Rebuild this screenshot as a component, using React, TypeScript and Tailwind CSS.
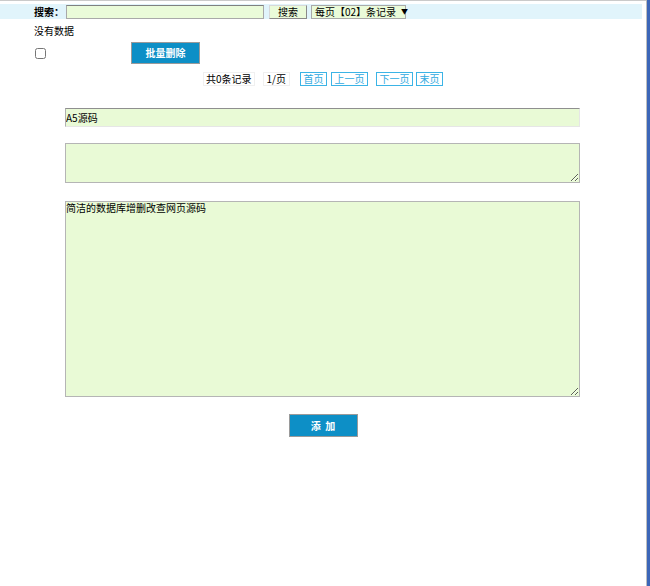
const font = "font-['SimSun','Noto_Sans_CJK_SC','Liberation_Sans',sans-serif]";

const pageLinks = [
  { label: "首页", w: "w-[27px]", ml: "ml-[10px]" },
  { label: "上一页", w: "w-[37px]", ml: "ml-[4px]" },
  { label: "下一页", w: "w-[37px]", ml: "ml-[8px]" },
  { label: "末页", w: "w-[27px]", ml: "ml-[3px]" },
];

export default function App() {
  return (
    <div className={`flex h-[586px] w-[650px] whitespace-nowrap bg-white text-[10px] leading-none text-black ${font}`}>
      <div className="w-[646px] border-t border-[#cacaca]">
        {/* search bar */}
        <div className="mt-[3px] mr-[4px] flex h-[15px] items-center bg-[#e1f4fb]">
          <span className="ml-[34px] w-[32px] font-bold">搜索：</span>
          <input
            className="h-[14px] w-[198px] border border-[#a9a9a9] border-t-[#808080] bg-[#eafbd9] outline-none"
            readOnly
          />
          <button className="ml-[5px] flex h-[14px] w-[38px] items-center justify-center border border-[#8a8a8a] border-t-[#d8d8d8] border-l-[#d8d8d8] bg-[#eafbd9] text-[10px] leading-none">
            搜索
          </button>
          <div className="ml-[4px] flex h-[14px] w-[95px] items-center border border-[#a9a9a9] bg-[#eafbd9] pl-[3px]">
            <span>每页【02】条记录</span>
            <span className="ml-[5px] text-[7px]">▼</span>
          </div>
        </div>

        <div className="ml-[34px] mt-[7px] h-[10px]">没有数据</div>

        {/* bulk actions */}
        <div className="mt-[6px] flex h-[22px] items-center">
          <input type="checkbox" className="ml-[35px] h-[11px] w-[11px]" readOnly />
          <button className="ml-[85px] h-[22px] w-[69px] border border-[#9a9a9a] bg-[#0d8fc6] text-[10px] font-bold text-white">
            批量删除
          </button>
        </div>

        {/* pagination */}
        <div className="mt-[8px] flex h-[14px] items-center justify-center">
          <span className="flex h-[14px] items-center border border-[#f0f0f0] px-[2px]">共0条记录</span>
          <span className="ml-[8px] flex h-[14px] items-center border border-[#f0f0f0] px-[3px]">1/页</span>
          {pageLinks.map((p) => (
            <span
              key={p.label}
              className={`${p.ml} ${p.w} flex h-[14px] items-center justify-center border border-[#3bb4e6] text-[#2fa9e0]`}
            >
              {p.label}
            </span>
          ))}
        </div>

        {/* form */}
        <div className="ml-[65px] mt-[22px] flex w-[515px] flex-col">
          <input
            className="h-[19px] border border-[#e6e6e6] border-t-[#8f8f8f] border-l-[#b0b0b0] bg-[#e9fad6] px-0 text-[10px] outline-none"
            defaultValue="A5源码"
          />
          <textarea
            className="mt-[16px] h-[40px] border border-[#b5b5b5] bg-[#e9fad6] text-[10px] outline-none"
            readOnly
          />
          <textarea
            className="mt-[18px] h-[196px] border border-[#b5b5b5] bg-[#e9fad6] text-[10px] leading-[12px] outline-none"
            defaultValue="简洁的数据库增删改查网页源码"
          />
        </div>

        <div className="mt-[17px] flex justify-center">
          <button className="h-[23px] w-[69px] border border-[#9a9a9a] bg-[#0d8fc6] text-[10px] font-bold text-white">
            添&nbsp;&nbsp;加
          </button>
        </div>
      </div>
      <div className="w-px bg-[#bdbdbd]" />
      <div className="w-[3px] bg-[#3c66b8]" />
    </div>
  );
}
